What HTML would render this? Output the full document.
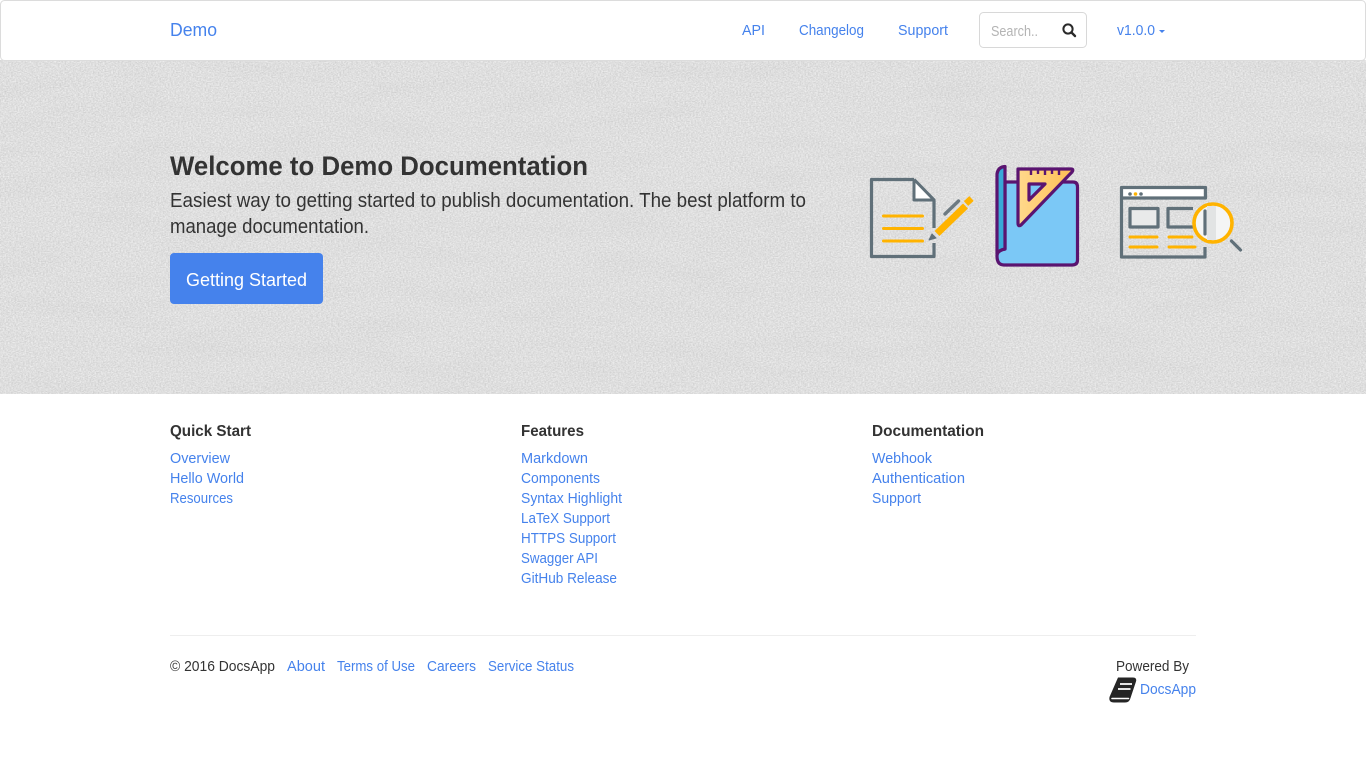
<!DOCTYPE html>
<html lang="en"><head><meta charset="utf-8"><title>Demo Documentation</title>
<style>
html,body{margin:0;padding:0;width:1366px;height:768px;overflow:hidden;background:#fff}
svg{display:block;position:absolute;left:0;top:0}
text{font-family:"Liberation Sans",Arial,sans-serif;font-size:15px;fill:#4582ec}
.d{fill:#333}
.h{font-size:16px;font-weight:700;fill:#333}
</style></head><body>
<svg width="1366" height="768" viewBox="0 0 1366 768" xmlns="http://www.w3.org/2000/svg">
<defs>
<filter id="n" x="0" y="0" width="100%" height="100%" color-interpolation-filters="sRGB">
<feTurbulence type="fractalNoise" baseFrequency="0.6 0.8" numOctaves="3" seed="4"/>
<feColorMatrix values=".2 0 0 0 .775  .2 0 0 0 .775  .2 0 0 0 .775  0 0 0 0 1"/>
</filter>
<filter id="m" x="0" y="0" width="100%" height="100%" color-interpolation-filters="sRGB">
<feTurbulence type="fractalNoise" baseFrequency="0.012 0.05" numOctaves="3" seed="11"/>
<feColorMatrix values="0 0 0 0 .5  0 0 0 0 .5  0 0 0 0 .5  .7 0 0 0 -.3"/>
</filter>
<linearGradient id="o" x1="0" y1="0" x2="1" y2="0"><stop offset="0" stop-color="#ffd98c"/><stop offset="1" stop-color="#ffbe55"/></linearGradient>
</defs>

<!-- hero -->
<rect x="0" y="60" width="1366" height="334" fill="#dfdfdf"/>
<rect x="0" y="60" width="1366" height="334" filter="url(#n)"/>
<rect x="0" y="60" width="1366" height="334" filter="url(#m)" opacity=".1"/>

<!-- navbar -->
<rect x="0.5" y="0.5" width="1365" height="60" rx="4" fill="#fff" stroke="#dcdcdc"/>
<text x="170" y="36" style="font-size:18px" textLength="47" lengthAdjust="spacingAndGlyphs">Demo</text>
<text x="742" y="35" style="font-size:14.5px" textLength="23" lengthAdjust="spacingAndGlyphs">API</text>
<text x="799" y="35" style="font-size:14.5px" textLength="65" lengthAdjust="spacingAndGlyphs">Changelog</text>
<text x="898" y="35" style="font-size:14.5px" textLength="50" lengthAdjust="spacingAndGlyphs">Support</text>
<rect x="979.5" y="12.5" width="107" height="35" rx="4" fill="#fff" stroke="#d8d8d8"/>
<text x="991" y="36" style="font-size:14.5px;fill:#b4b4b4" textLength="47" lengthAdjust="spacingAndGlyphs">Search..</text>
<circle cx="1068" cy="29" r="4.6" fill="none" stroke="#2a2a2a" stroke-width="2"/>
<path d="M1071.5 32.5L1075 36" stroke="#2a2a2a" stroke-width="2.4" stroke-linecap="round"/>
<text x="1117" y="35" style="font-size:14.5px" textLength="38" lengthAdjust="spacingAndGlyphs">v1.0.0</text>
<path d="M1159 30h6l-3 3z" fill="#4582ec"/>

<!-- hero text -->
<text x="170" y="175" class="d" style="font-size:27px;font-weight:700" textLength="418" lengthAdjust="spacingAndGlyphs">Welcome to Demo Documentation</text>
<text x="170" y="207" class="d" style="font-size:20px" textLength="636" lengthAdjust="spacingAndGlyphs">Easiest way to getting started to publish documentation. The best platform to</text>
<text x="170" y="233" class="d" style="font-size:20px" textLength="199" lengthAdjust="spacingAndGlyphs">manage documentation.</text>
<rect x="170" y="253" width="153" height="51" rx="4" fill="#4582ec"/>
<text x="186" y="286" style="font-size:18.5px;fill:#fff" textLength="121" lengthAdjust="spacingAndGlyphs">Getting Started</text>

<!-- document icon -->
<g fill="none" stroke-linejoin="round">
<path d="M914 179.500H871.500V256.500H934V243" stroke="#607079" stroke-width="3.200"/>
<path d="M934 228V200L914 179.500" stroke="#607079" stroke-width="3.200"/>
<path d="M915.500 183V198.500H930.500Z" fill="#fff"/>
<path d="M914 180V200H934" stroke="#607079" stroke-width="3"/>
<path d="M883.500 216H922.500M883.500 228.500H922.500M883.500 241H922.500" stroke="#ffb300" stroke-width="3" stroke-linecap="round"/>
<path d="M937 233.500L965.500 206" stroke="#ffb300" stroke-width="7"/>
<path d="M966 203.500L971.500 198.500" stroke="#ffb300" stroke-width="6.500"/>
<path d="M945 214L958.500 201" stroke="#6d7a82" stroke-width="3.400" stroke-linecap="round"/>
<path d="M929 240L932 234L936 238Z" fill="#607079" stroke="#607079"/>
</g>

<!-- book icon -->
<g stroke="#5a1470" stroke-width="3.200" stroke-linejoin="round">
<path d="M1005 182H1073Q1077.500 182 1077.500 187V260Q1077.500 265 1072 265H1004Q997 265 997 256Q997 250 1005 249Z" fill="#7bc8f6"/>
<path d="M1005 166.500V249Q999 250 997 254V174Q998 167 1005 166.500Z" fill="#38a9d8"/>
<path d="M1018 169H1071Q1074 169 1072 172L1021 225Q1018 227 1018 223Z" fill="url(#o)"/>
<path d="M1029 184H1045L1029 200Z" fill="#7bc8f6"/>
<path d="M1031 170V175M1038 170V174M1045 170V175M1052 170V174M1059 170V175" stroke-width="2.400"/>
</g>

<!-- browser icon -->
<g fill="none" stroke="#607079" stroke-width="3.200" stroke-linejoin="round">
<rect x="1122.500" y="189" width="81" height="8" fill="#fff" stroke="none"/>
<path d="M1205 247V257H1121.500V187.500H1205.500V198H1121.500"/>
<rect x="1130" y="208.500" width="28" height="18.500" fill="#e9eaea"/>
<path d="M1193 208.500H1168V227H1193"/>
</g>
<circle cx="1130" cy="194" r="1.800" fill="#607079"/><circle cx="1135.500" cy="194" r="1.800" fill="#ffb300"/><circle cx="1141" cy="194" r="1.800" fill="#607079"/>
<path d="M1130 237H1157M1169 237H1192M1130 247H1157M1169 247H1195" stroke="#ffb300" stroke-width="3" stroke-linecap="round"/>
<circle cx="1213" cy="223" r="19" fill="#f4f5f5" stroke="#ffb300" stroke-width="3.600"/>
<rect x="1207" y="206" width="9" height="34" fill="#e2e4e4"/>
<path d="M1205 211V234" stroke="#607079" stroke-width="3.200" stroke-linecap="round"/>
<path d="M1231.500 241L1240.500 250" stroke="#607079" stroke-width="3.200" stroke-linecap="round"/>

<!-- footer columns -->
<text x="170" y="436" class="h" textLength="81" lengthAdjust="spacingAndGlyphs">Quick Start</text>
<text x="521" y="436" class="h" textLength="63" lengthAdjust="spacingAndGlyphs">Features</text>
<text x="872" y="436" class="h" textLength="112" lengthAdjust="spacingAndGlyphs">Documentation</text>

<text x="170" y="463" textLength="60" lengthAdjust="spacingAndGlyphs">Overview</text>
<text x="170" y="483" textLength="74" lengthAdjust="spacingAndGlyphs">Hello World</text>
<text x="170" y="503" textLength="63" lengthAdjust="spacingAndGlyphs">Resources</text>

<text x="521" y="463" textLength="67" lengthAdjust="spacingAndGlyphs">Markdown</text>
<text x="521" y="483" textLength="79" lengthAdjust="spacingAndGlyphs">Components</text>
<text x="521" y="503" textLength="101" lengthAdjust="spacingAndGlyphs">Syntax Highlight</text>
<text x="521" y="523" textLength="89" lengthAdjust="spacingAndGlyphs">LaTeX Support</text>
<text x="521" y="543" textLength="95" lengthAdjust="spacingAndGlyphs">HTTPS Support</text>
<text x="521" y="563" textLength="77" lengthAdjust="spacingAndGlyphs">Swagger API</text>
<text x="521" y="583" textLength="96" lengthAdjust="spacingAndGlyphs">GitHub Release</text>

<text x="872" y="463" textLength="60" lengthAdjust="spacingAndGlyphs">Webhook</text>
<text x="872" y="483" textLength="93" lengthAdjust="spacingAndGlyphs">Authentication</text>
<text x="872" y="503" textLength="49" lengthAdjust="spacingAndGlyphs">Support</text>

<!-- bottom -->
<rect x="170" y="635" width="1026" height="1" fill="#eee"/>
<text x="170" y="671" class="d" textLength="105" lengthAdjust="spacingAndGlyphs">© 2016 DocsApp</text>
<text x="287" y="671" textLength="38" lengthAdjust="spacingAndGlyphs">About</text>
<text x="337" y="671" textLength="78" lengthAdjust="spacingAndGlyphs">Terms of Use</text>
<text x="427" y="671" textLength="49" lengthAdjust="spacingAndGlyphs">Careers</text>
<text x="488" y="671" textLength="86" lengthAdjust="spacingAndGlyphs">Service Status</text>
<text x="1116" y="671" class="d" textLength="73" lengthAdjust="spacingAndGlyphs">Powered By</text>
<text x="1140" y="694" textLength="56" lengthAdjust="spacingAndGlyphs">DocsApp</text>
<path d="M1118 677.500H1133Q1137 677.500 1136 681.500L1130.500 698Q1129.500 702.500 1125 702.500H1114Q1108.500 702.500 1109.500 697Z" fill="#252525"/>
<path d="M1112 698.500H1128.500" stroke="#fff" stroke-width="1.600" stroke-linecap="round"/>
<path d="M1120 684H1132M1118 689H1130.500" stroke="#e4e4e4" stroke-width="1.900"/>
</svg>
</body></html>
